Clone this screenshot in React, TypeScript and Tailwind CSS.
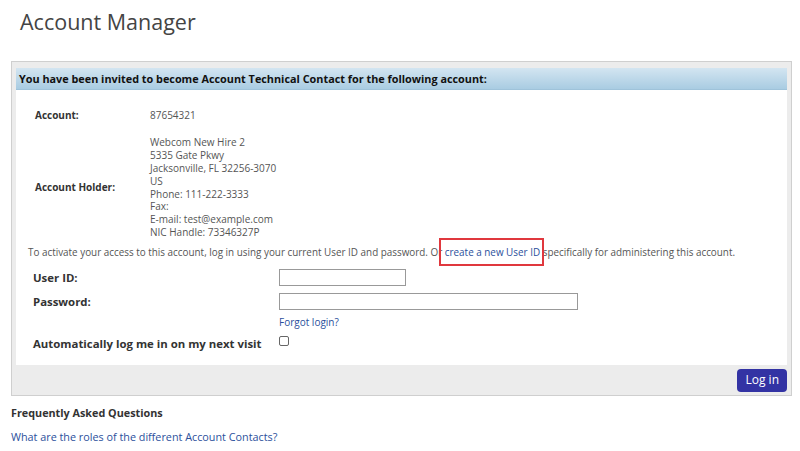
export default function App() {
  return (
    <div className="w-[800px] h-[451px] bg-white overflow-hidden text-[#444]" style={{ fontFamily: '"Open Sans", sans-serif' }}>
      <h1 className="pl-[20px] pt-[7px] text-[21.5px] leading-[30px] text-[#444]">Account Manager</h1>

      <div className="ml-[11px] mt-[24px] w-[781px] border border-[#cfcfcf] bg-[#ececec]">
        <div className="mx-[4px] mt-[6px] bg-white">
          <div className="h-[22px] pl-[3px] pt-[2px] flex items-center bg-gradient-to-b from-[#d3e5f1] to-[#a9cce2] border-b border-[#9fc3da] text-[10.85px] font-bold text-[#111]">
            You have been invited to become Account Technical Contact for the following account:
          </div>

          <div className="pl-[19px] pt-[19px] text-[10px] leading-[12.9px] text-[#555]">
            <div className="flex">
              <div className="w-[115px] font-bold text-[#333]">Account:</div>
              <div>87654321</div>
            </div>
            <div className="flex items-center mt-[14px]">
              <div className="w-[115px] font-bold text-[#333]">Account Holder:</div>
              <div>
                <div>Webcom New Hire 2</div>
                <div>5335 Gate Pkwy</div>
                <div>Jacksonville, FL 32256-3070</div>
                <div>US</div>
                <div>Phone: 111-222-3333</div>
                <div>Fax:</div>
                <div>E-mail: test@example.com</div>
                <div>NIC Handle: 73346327P</div>
              </div>
            </div>
          </div>

          <p className="pl-[12px] mt-[7px] text-[9.9px] leading-[13px] text-[#555]">
            To activate your access to this account, log in using your current User ID and password. Or{" "}
            <span className="relative">
              <a className="text-[#2b4f9c]">create a new User ID</a>
              <span className="absolute left-[-6px] right-[-4px] top-[-7px] bottom-[-7px] border-[2.5px] border-[#e0383e] pointer-events-none"></span>
            </span>{" "}
            specifically for administering this account.
          </p>

          <div className="pl-[17px] pt-[10px] pb-[13px] text-[11.4px] font-bold text-[#333]">
            <div className="flex items-center h-[17px]">
              <div className="w-[246px]">User ID:</div>
              <input className="w-[127px] h-[17px] border border-[#999] bg-white" />
            </div>
            <div className="flex items-center h-[17px] mt-[7px]">
              <div className="w-[246px]">Password:</div>
              <input className="w-[299px] h-[17px] border border-[#999] bg-white" />
            </div>
            <div className="pl-[246px] mt-[5px] text-[10px] font-normal text-[#2b4f9c]">Forgot login?</div>
            <div className="flex items-center mt-[5px]">
              <div className="w-[246px]">Automatically log me in on my next visit</div>
              <span className="w-[10px] h-[10px] border border-[#666] rounded-[2px] bg-white -mt-[5px]"></span>
            </div>
          </div>
        </div>

        <div className="h-[30px] flex items-center justify-end pr-[4px]">
          <button className="h-[23px] px-[8px] rounded-[4px] bg-[#3333a4] text-white text-[12px]">Log in</button>
        </div>
      </div>

      <div className="pl-[11px] pt-[9px] text-[10.8px]">
        <div className="font-bold text-[#333] leading-[15px]">Frequently Asked Questions</div>
        <div className="mt-[9px] text-[#2b4f9c] leading-[15px]">What are the roles of the different Account Contacts?</div>
      </div>
    </div>
  );
}
